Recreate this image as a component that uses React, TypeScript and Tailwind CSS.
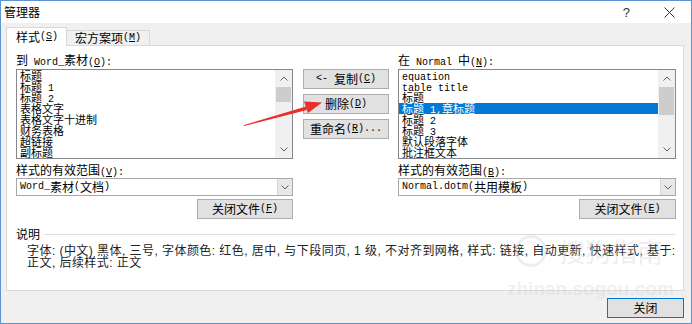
import React from "react";

const MONO = "font-['Liberation_Mono',monospace] text-[10px] whitespace-pre";

function isA(c: string) {
  return c.charCodeAt(0) < 128;
}

function T({ s }: { s: string }) {
  const out: React.ReactNode[] = [];
  let i = 0;
  let k = 0;
  while (i < s.length) {
    if (s[i] === "&") {
      const c = s[i + 1];
      out.push(
        <span
          key={k++}
          className={isA(c) ? "font-['Liberation_Mono',monospace] text-[10px] underline" : "underline"}
        >
          {c}
        </span>
      );
      i += 2;
      continue;
    }
    const a = isA(s[i]);
    let j = i;
    while (j < s.length && s[j] !== "&" && isA(s[j]) === a) j++;
    const t = s.slice(i, j);
    out.push(
      a ? (
        <span key={k++} className={MONO}>
          {t}
        </span>
      ) : (
        <span key={k++}>{t}</span>
      )
    );
    i = j;
  }
  return <>{out}</>;
}

function ChevUp() {
  return (
    <svg width="8" height="5" viewBox="0 0 8 5">
      <polyline points="0.5,4.5 4,1 7.5,4.5" fill="none" stroke="#606060" strokeWidth="1" />
    </svg>
  );
}
function ChevDown() {
  return (
    <svg width="8" height="5" viewBox="0 0 8 5">
      <polyline points="0.5,0.5 4,4 7.5,0.5" fill="none" stroke="#606060" strokeWidth="1" />
    </svg>
  );
}

function ListBox({ items, sel, thumbClass }: { items: string[]; sel: number; thumbClass: string }) {
  return (
    <div className="h-[90px] border border-[#828790] bg-white flex">
      <div className="flex-1 flex flex-col min-w-0 text-[11px]">
        {items.map((it, i) => (
          <div
            key={i}
            className={
              i === sel
                ? "h-[11px] leading-[11px] pl-[3px] whitespace-nowrap overflow-visible bg-[#0078d7] text-white"
                : "h-[11px] leading-[11px] pl-[3px] whitespace-nowrap overflow-visible"
            }
          >
            <T s={it} />
          </div>
        ))}
      </div>
      <div className="w-[17px] bg-[#f0f0f0] flex flex-col">
        <div className="h-[17px] flex items-center justify-center">
          <ChevUp />
        </div>
        <div className="flex-1 flex flex-col px-[1px]">
          <div className={thumbClass} />
        </div>
        <div className="h-[17px] flex items-center justify-center">
          <ChevDown />
        </div>
      </div>
    </div>
  );
}

function Btn({ s, className }: { s: string; className: string }) {
  return (
    <div
      className={
        "h-[20px] border border-[#adadad] bg-[#e1e1e1] flex items-center justify-center leading-[12px] whitespace-nowrap " +
        className
      }
    >
      <T s={s} />
    </div>
  );
}

function Combo({ s }: { s: string }) {
  return (
    <div className="h-[18px] border border-[#a8a8a8] bg-white flex">
      <div className="flex-1 pl-[3px] flex items-center leading-[12px] whitespace-nowrap">
        <T s={s} />
      </div>
      <div className="w-[15px] bg-[#e8e8e8] border-l border-[#d4d4d4] flex items-center justify-center">
        <ChevDown />
      </div>
    </div>
  );
}

export default function App() {
  return (
    <div className="w-[692px] h-[324px] relative bg-[#f0f0f0] border border-[#5d95d0] flex flex-col font-['Noto_Sans_CJK_SC',sans-serif] text-[12px] text-black overflow-hidden">
      {/* Title bar */}
      <div className="h-[22px] bg-white flex items-center shrink-0 pl-[3px] pr-[12px]">
        <span className="leading-[12px]">管理器</span>
        <div className="flex-1" />
        <span className="font-['Liberation_Sans',sans-serif] text-[13px] text-[#333] leading-[13px] mr-[34px]">?</span>
        <svg width="11" height="11" viewBox="0 0 11 11" className="mr-[4px]">
          <line x1="0.5" y1="0.5" x2="10.5" y2="10.5" stroke="#333" strokeWidth="1" />
          <line x1="10.5" y1="0.5" x2="0.5" y2="10.5" stroke="#333" strokeWidth="1" />
        </svg>
      </div>

      {/* Tabs */}
      <div className="h-[22px] flex items-end pl-[5px] shrink-0">
        <div className="relative z-10 -mb-px h-[19px] bg-white border border-b-0 border-[#d9d9d9] pl-[9px] pr-[8px] flex items-center leading-[12px] whitespace-nowrap">
          <T s="样式(&S)" />
        </div>
        <div className="h-[15px] bg-[#f0f0f0] border border-l-0 border-b-0 border-[#d9d9d9] pl-[8px] pr-[8px] flex items-center leading-[12px] whitespace-nowrap">
          <T s="宏方案项(&M)" />
        </div>
      </div>

      {/* Panel */}
      <div className="ml-[5px] w-[678px] h-[246px] bg-white border border-[#d9d9d9] flex flex-col pl-[9px] pr-[6px] shrink-0">
        <div className="flex">
          {/* Left column */}
          <div className="w-[277px] flex flex-col">
            <div className="mt-[8px] h-[12px] leading-[12px] whitespace-nowrap">
              <T s="到 Word_素材(&O):" />
            </div>
            <div className="mt-[3px]">
              <ListBox
                items={["标题", "标题 1", "标题 2", "表格文字", "表格文字十进制", "财务表格", "超链接", "副标题"]}
                sel={-1}
                thumbClass="h-[15px] bg-[#cdcdcd]"
              />
            </div>
            <div className="mt-[5px] h-[12px] leading-[12px] whitespace-nowrap">
              <T s="样式的有效范围(&V):" />
            </div>
            <div className="mt-[2px]">
              <Combo s="Word_素材(文档)" />
            </div>
            <div className="mt-[3px] flex justify-end">
              <Btn s="关闭文件(&F)" className="w-[96px]" />
            </div>
          </div>

          {/* Middle column */}
          <div className="ml-[10px] w-[86px] pt-[23px] flex flex-col gap-[5px]">
            <Btn s="<- 复制(&C)" className="w-full" />
            <Btn s="删除(&D)" className="w-full" />
            <Btn s="重命名(&R)..." className="w-full" />
          </div>

          {/* Right column */}
          <div className="ml-[9px] w-[278px] flex flex-col">
            <div className="mt-[8px] h-[12px] leading-[12px] whitespace-nowrap">
              <T s="在 Normal 中(&N):" />
            </div>
            <div className="mt-[3px]">
              <ListBox
                items={["equation", "table title", "标题", "标题 1,章标题", "标题 2", "标题 3", "默认段落字体", "批注框文本"]}
                sel={3}
                thumbClass="h-[28px] bg-[#cdcdcd]"
              />
            </div>
            <div className="mt-[5px] h-[12px] leading-[12px] whitespace-nowrap">
              <T s="样式的有效范围(&B):" />
            </div>
            <div className="mt-[2px]">
              <Combo s="Normal.dotm(共用模板)" />
            </div>
            <div className="mt-[3px] flex justify-end">
              <Btn s="关闭文件(&E)" className="w-[97px]" />
            </div>
          </div>
        </div>

        {/* Description group */}
        <div className="mt-[9px] flex items-center h-[12px] pr-[2px]">
          <span className="leading-[12px]">说明</span>
          <div className="flex-1 ml-[4px] h-px bg-[#dcdcdc]" />
        </div>
        <div className="mt-[5px] pl-[11px] font-['Liberation_Sans','Noto_Sans_CJK_SC',sans-serif] text-[12px] leading-[12px] tracking-[0.45px] text-[#222] whitespace-nowrap">
          字体: (中文) 黑体, 三号, 字体颜色: 红色, 居中, 与下段同页, 1 级, 不对齐到网格, 样式: 链接, 自动更新, 快速样式, 基于:
          <br />
          正文, 后续样式: 正文
        </div>
      </div>

      {/* Bottom */}
      <div className="ml-[5px] w-[678px] flex justify-end pt-[7px]">
        <div className="w-[77px] h-[20px] border border-[#0078d7] bg-[#e1e1e1] flex items-center justify-center leading-[12px]">
          关闭
        </div>
      </div>

      {/* Watermark */}
      <div className="absolute left-[514px] top-[234px] pointer-events-none opacity-30">
        <div className="flex items-center">
          <div className="w-[32px] h-[32px] rounded-full border-[3px] border-[#c8c8c8]" />
          <span className="ml-[12px] text-[26px] leading-[30px] text-[#c8c8c8] font-['Noto_Sans_CJK_SC',sans-serif]">搜狗指南</span>
        </div>
        <div className="mt-[12px] -ml-[8px] text-[19px] leading-[20px] font-bold text-[#d0d0d0] font-['Liberation_Sans',sans-serif]">
          zhinan.sogou.com
        </div>
      </div>

      {/* Red arrow annotation */}
      <svg className="absolute left-0 top-0 pointer-events-none" width="692" height="324">
        <polygon points="243,124 305,105.5 306,109 243,125" fill="#e8302a" />
        <polygon points="321,101.5 303,100.5 307,112" fill="#e8302a" />
      </svg>
    </div>
  );
}
